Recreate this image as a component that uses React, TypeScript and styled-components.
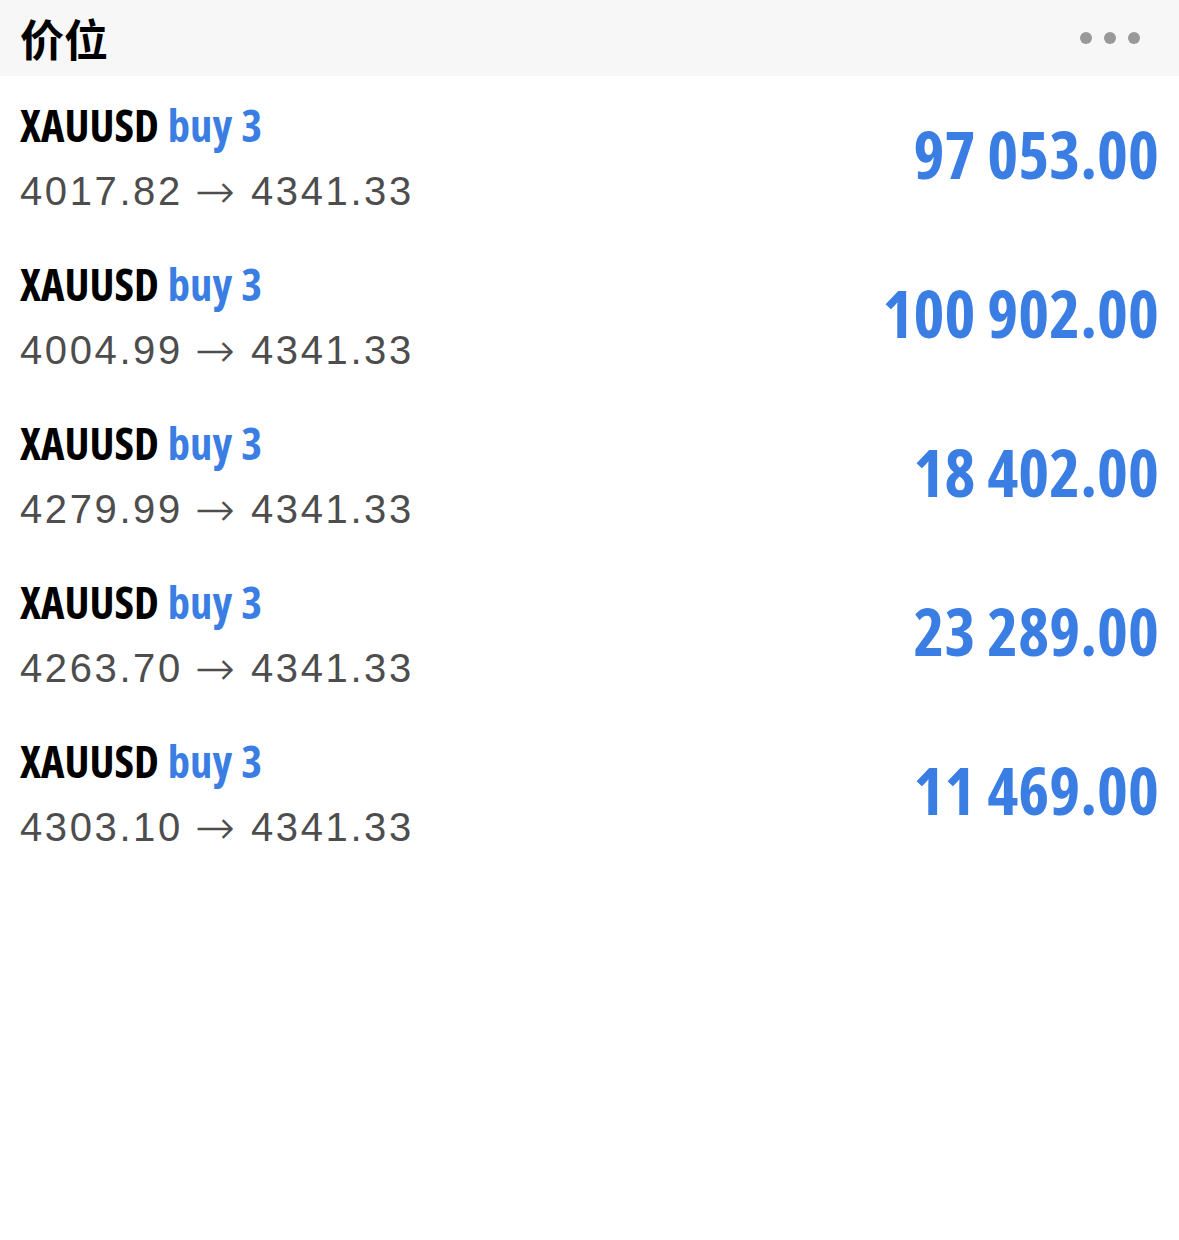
import styled, { createGlobalStyle } from "styled-components";

interface Position {
  symbol: string;
  side: string;
  volume: number;
  open: string;
  current: string;
  profit: string;
}

const positions: Position[] = [
  { symbol: "XAUUSD", side: "buy", volume: 3, open: "4017.82", current: "4341.33", profit: "97 053.00" },
  { symbol: "XAUUSD", side: "buy", volume: 3, open: "4004.99", current: "4341.33", profit: "100 902.00" },
  { symbol: "XAUUSD", side: "buy", volume: 3, open: "4279.99", current: "4341.33", profit: "18 402.00" },
  { symbol: "XAUUSD", side: "buy", volume: 3, open: "4263.70", current: "4341.33", profit: "23 289.00" },
  { symbol: "XAUUSD", side: "buy", volume: 3, open: "4303.10", current: "4341.33", profit: "11 469.00" },
];

const GlobalStyle = createGlobalStyle`
  body {
    margin: 0;
    background: #ffffff;
    font-family: "Liberation Sans", Arial, sans-serif;
  }
`;

const condensed = `"Open Sans", "DejaVu Sans Condensed", sans-serif`;

const Page = styled.div`
  width: 1179px;
  min-height: 1240px;
  background: #ffffff;
`;

const Header = styled.header`
  height: 76px;
  padding: 0 20px;
  display: flex;
  align-items: center;
  justify-content: space-between;
  background: #f7f7f7;
`;

const Title = styled.h1`
  margin: 0;
  font-family: "Noto Sans CJK SC", "Noto Sans", sans-serif;
  font-size: 44px;
  font-weight: 700;
  color: #000000;
  line-height: 1;
`;

const Dots = styled.button`
  display: flex;
  gap: 12px;
  padding: 0;
  margin-right: 19px;
  border: none;
  background: none;
`;

const Dot = styled.span`
  width: 12px;
  height: 12px;
  border-radius: 50%;
  background: #999999;
`;

const Row = styled.div`
  height: 159px;
  padding: 0 20px;
  display: flex;
  align-items: center;
  justify-content: space-between;
`;

const Info = styled.div`
  display: flex;
  flex-direction: column;
  gap: 20px;
  margin-top: 7px;
`;

const Label = styled.div`
  font-family: ${condensed};
  font-stretch: 75%;
  font-weight: 700;
  font-size: 44.5px;
  word-spacing: 1px;
  line-height: 1;
  color: #000000;
`;

const Side = styled.span`
  color: #3a7de3;
`;

const Prices = styled.div`
  display: flex;
  align-items: center;
  font-family: "Liberation Sans", Arial, sans-serif;
  font-size: 40px;
  letter-spacing: 2.6px;
  line-height: 1;
  color: #4d4d4d;
`;

const Arrow = styled.span`
  margin: 0 16px 0 12px;
  font-family: "DejaVu Sans", sans-serif;
  font-size: 48px;
  font-weight: 200;
  letter-spacing: 0;
  color: #4d4d4d;
`;

const Profit = styled.div`
  margin-bottom: 6px;
  font-family: ${condensed};
  font-stretch: 75%;
  font-weight: 700;
  font-size: 66px;
  line-height: 1;
  color: #3a7de3;
`;

export default function App() {
  return (
    <Page>
      <GlobalStyle />
      <Header>
        <Title>价位</Title>
        <Dots type="button" aria-label="more">
          <Dot />
          <Dot />
          <Dot />
        </Dots>
      </Header>
      {positions.map((p, i) => (
        <Row key={i}>
          <Info>
            <Label>
              {p.symbol} <Side>{p.side} {p.volume}</Side>
            </Label>
            <Prices>
              <span>{p.open}</span>
              <Arrow>→</Arrow>
              <span>{p.current}</span>
            </Prices>
          </Info>
          <Profit>{p.profit}</Profit>
        </Row>
      ))}
    </Page>
  );
}
